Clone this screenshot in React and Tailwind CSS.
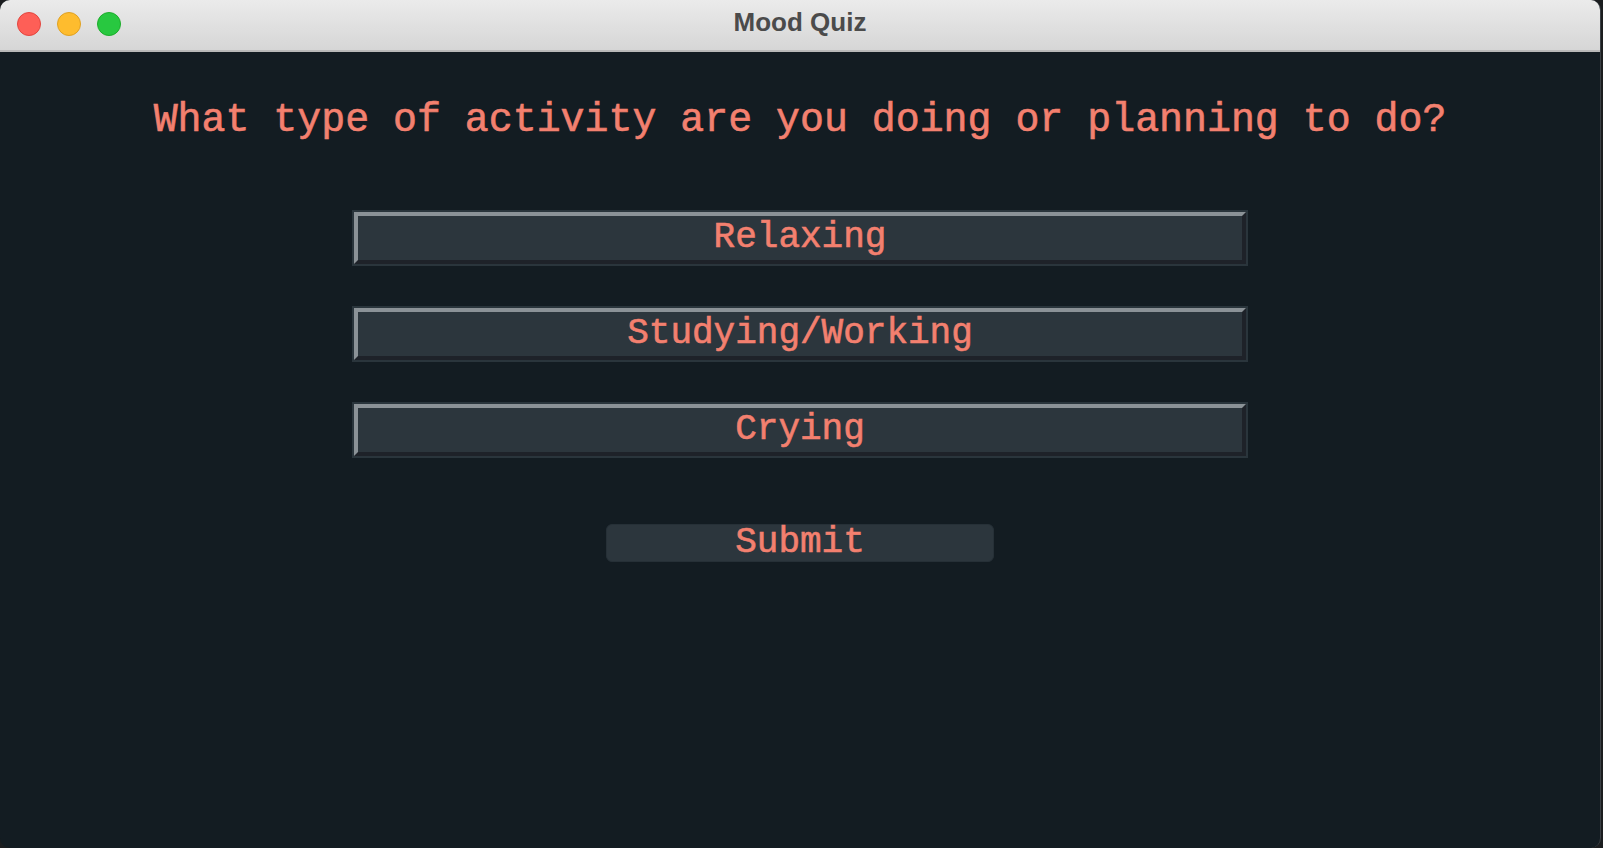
import { useState } from 'react';

const options = ['Relaxing', 'Studying/Working', 'Crying'];

export default function App() {
  const [choice, setChoice] = useState(null);

  return (
    <div className="w-[1603px] h-[848px] bg-[#1b1d1f] overflow-hidden">
      <div className="w-[1601px] h-[848px] rounded-[10px] overflow-hidden flex flex-col bg-[#131c22] border-r border-[#3a3f44]">
        {/* Title bar */}
        <div className="relative h-[52px] shrink-0 bg-gradient-to-b from-[#ebebeb] to-[#d6d6d6] border-b-2 border-[#b9b9b9] flex items-center justify-center">
          <div className="absolute left-[17px] top-[12px] flex gap-4">
            <span className="w-6 h-6 rounded-full bg-[#fe5f57] border border-[#e2463f]" />
            <span className="w-6 h-6 rounded-full bg-[#febc2e] border border-[#dfa123]" />
            <span className="w-6 h-6 rounded-full bg-[#28c840] border border-[#1dad2b]" />
          </div>
          <span className="font-['Liberation_Sans',Arial,sans-serif] font-bold text-[26px] text-[#4b4b4b] -mt-[6px]">
            Mood Quiz
          </span>
        </div>

        {/* Quiz */}
        <div className="flex-1 flex flex-col items-center font-['Liberation_Mono','Courier_New',monospace] text-[#f3806f] [-webkit-text-stroke:0.6px_#f3806f]">
          <h1 className="mt-[45px] text-[39.9px] leading-[48px] font-normal">
            What type of activity are you doing or planning to do?
          </h1>

          <div className="mt-[65px] flex flex-col gap-10">
            {options.map(opt => (
              <button
                key={opt}
                onClick={() => setChoice(opt)}
                className="w-[896px] h-14 border-2 border-[#2a353c] bg-[#2c363d]"
              >
                <div
                  className={`h-full border-4 border-t-[#8b9297] border-l-[#8b9297] border-b-[#1e2229] border-r-[#1e2229] flex items-center justify-center text-[36px] leading-none ${
                    choice === opt ? 'bg-[#36424a]' : 'bg-[#2c363d]'
                  }`}
                >
                  {opt}
                </div>
              </button>
            ))}
          </div>

          <button className="mt-[66px] w-[388px] h-[38px] rounded-[6px] bg-[#2c363d] border border-[#263037] text-[36px] leading-none flex items-center justify-center">
            Submit
          </button>
        </div>
      </div>
    </div>
  );
}
